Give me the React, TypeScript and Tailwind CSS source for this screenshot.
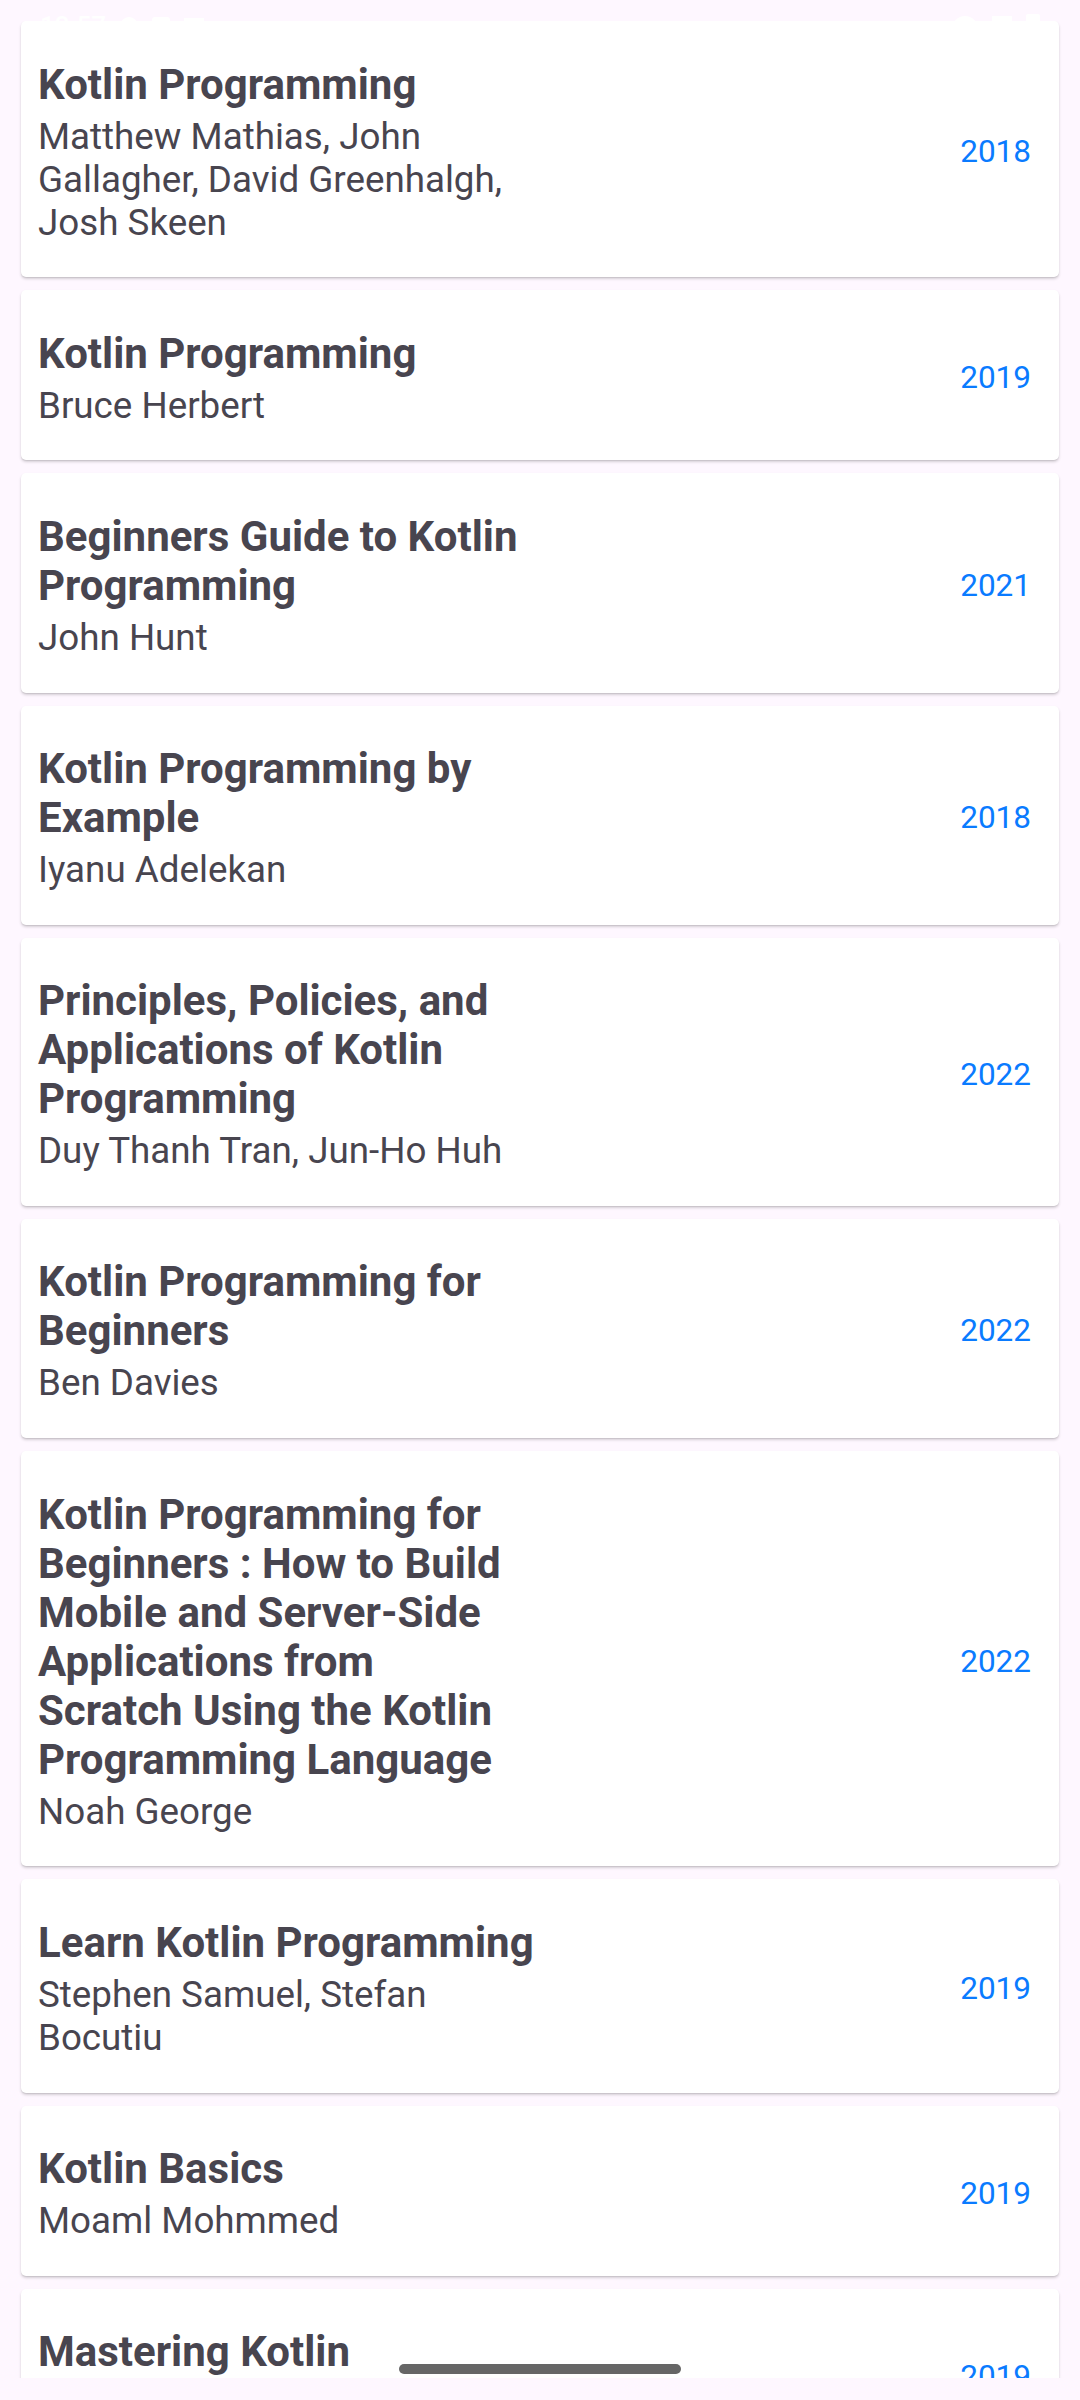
import React from "react";

type Book = { title: string; authors: string; year: string };

const books: Book[] = [
  { title: "Kotlin Programming", authors: "Matthew Mathias, John Gallagher, David Greenhalgh, Josh Skeen", year: "2018" },
  { title: "Kotlin Programming", authors: "Bruce Herbert", year: "2019" },
  { title: "Beginners Guide to Kotlin Programming", authors: "John Hunt", year: "2021" },
  { title: "Kotlin Programming by Example", authors: "Iyanu Adelekan", year: "2018" },
  { title: "Principles, Policies, and Applications of Kotlin Programming", authors: "Duy Thanh Tran, Jun-Ho Huh", year: "2022" },
  { title: "Kotlin Programming for Beginners", authors: "Ben Davies", year: "2022" },
  {
    title:
      "Kotlin Programming for Beginners : How to Build Mobile and Server-Side Applications from\nScratch Using the Kotlin Programming Language",
    authors: "Noah George",
    year: "2022",
  },
  { title: "Learn Kotlin Programming", authors: "Stephen Samuel, Stefan Bocutiu", year: "2019" },
  { title: "Kotlin Basics", authors: "Moaml Mohmmed", year: "2019" },
  { title: "Mastering Kotlin", authors: "Nate Ebel", year: "2019" },
];

function BookCard({ book }: { book: Book }) {
  return (
    <div className="flex-none flex items-center bg-white rounded-[5px] shadow-[0_2px_3px_rgba(0,0,0,0.16),0_1px_1px_rgba(0,0,0,0.08)] pl-[17px] pr-[28px] pt-[38.5px] pb-[33.7px]">
      <div className="w-[505px] flex-none flex flex-col">
        <div className="text-[42px] leading-[49px] font-bold text-[#48454f] whitespace-pre-line">{book.title}</div>
        <div className="mt-[6px] text-[36.75px] leading-[43px] text-[#48454f]">{book.authors}</div>
      </div>
      <div className="ml-auto text-[31.5px] leading-[37px] text-[#0a7bff]">{book.year}</div>
    </div>
  );
}

export default function App() {
  return (
    <div
      className="relative w-[1080px] h-[2400px] overflow-hidden bg-[#fef7ff]"
      style={{ fontFamily: "Roboto, 'Noto Sans', sans-serif" }}
    >
      <div className="pt-[21px]">
        <div className="h-[2357px] overflow-hidden px-[21px] flex flex-col gap-[13px]">
          {books.map((b, i) => (
            <BookCard key={i} book={b} />
          ))}
        </div>
      </div>

      {/* status bar (white icons) */}
      <div className="absolute top-[14px] left-[40px] right-[40px] h-[24px] flex items-center justify-between text-white">
        <div className="flex items-center gap-[14px]">
          <span className="text-[26px] leading-[24px] font-medium">12:57</span>
          <span className="w-[18px] h-[18px] rounded-full bg-white" />
          <span className="w-[18px] h-[18px] rounded-[3px] bg-white" />
          <span className="w-[20px] h-[16px] bg-white" />
        </div>
        <div className="flex items-center gap-[14px]">
          <span className="w-[26px] h-[20px] rounded-t-full bg-white" />
          <span className="w-[20px] h-[20px] bg-white" />
          <span className="w-[14px] h-[24px] rounded-[2px] bg-white" />
        </div>
      </div>

      {/* gesture nav pill */}
      <div className="absolute left-[399px] top-[2364px] w-[282px] h-[10px] rounded-full bg-[#666666]" />
    </div>
  );
}
